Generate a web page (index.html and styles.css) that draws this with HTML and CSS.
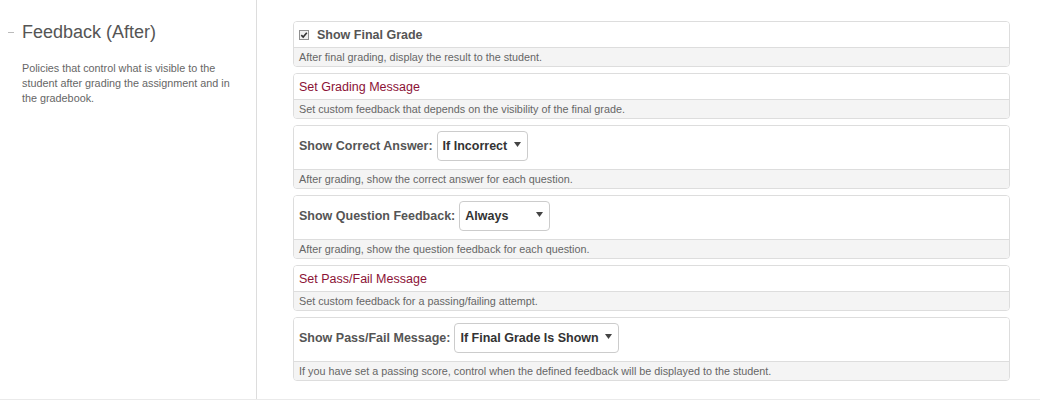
FILE: index.html
```html
<!DOCTYPE html>
<html>
<head>
<meta charset="utf-8">
<link rel="stylesheet" href="styles.css">
</head>
<body>
<div class="page">
  <aside class="sidebar">
    <h2 class="title"><span class="dash"></span>Feedback (After)</h2>
    <p class="desc">Policies that control what is visible to the student after grading the assignment and in the gradebook.</p>
  </aside>
  <main class="main">
    <section class="card">
      <div class="card-head">
        <span class="check"><svg width="10" height="10" viewBox="0 0 10 10"><rect x="0.5" y="0.5" width="9" height="9" fill="#f0f0f0" stroke="#8f8f8f"/><path d="M2.3 5.1 L4.2 7 L7.8 2.8" fill="none" stroke="#333" stroke-width="1.6"/></svg></span>
        <span class="label">Show Final Grade</span>
      </div>
      <div class="card-foot">After final grading, display the result to the student.</div>
    </section>
    <section class="card">
      <div class="card-head"><span class="link">Set Grading Message</span></div>
      <div class="card-foot">Set custom feedback that depends on the visibility of the final grade.</div>
    </section>
    <section class="card">
      <div class="card-head tall">
        <span class="label">Show Correct Answer:</span>
        <span class="select w-incorrect"><span>If Incorrect</span><svg class="caret" width="7" height="5" viewBox="0 0 7 5"><path d="M0 0 H7 L3.5 5 Z" fill="#444"/></svg></span>
      </div>
      <div class="card-foot">After grading, show the correct answer for each question.</div>
    </section>
    <section class="card">
      <div class="card-head tall">
        <span class="label">Show Question Feedback:</span>
        <span class="select w-always"><span>Always</span><svg class="caret" width="7" height="5" viewBox="0 0 7 5"><path d="M0 0 H7 L3.5 5 Z" fill="#444"/></svg></span>
      </div>
      <div class="card-foot">After grading, show the question feedback for each question.</div>
    </section>
    <section class="card">
      <div class="card-head"><span class="link">Set Pass/Fail Message</span></div>
      <div class="card-foot">Set custom feedback for a passing/failing attempt.</div>
    </section>
    <section class="card">
      <div class="card-head tall">
        <span class="label">Show Pass/Fail Message:</span>
        <span class="select w-shown"><span>If Final Grade Is Shown</span><svg class="caret" width="7" height="5" viewBox="0 0 7 5"><path d="M0 0 H7 L3.5 5 Z" fill="#444"/></svg></span>
      </div>
      <div class="card-foot">If you have set a passing score, control when the defined feedback will be displayed to the student.</div>
    </section>
  </main>
</div>
</body>
</html>
```

FILE: styles.css
```css
* { box-sizing: border-box; }
html, body { margin: 0; padding: 0; background: #fff; }
body { font-family: "Liberation Sans", Arial, sans-serif; color: #555; }

.page {
  display: flex;
  height: 400px;
  border-bottom: 1px solid #eaeaea;
}

.sidebar {
  width: 257px;
  flex: none;
  border-right: 1px solid #ddd;
  padding: 22px 20px 0 22px;
}

.title {
  position: relative;
  margin: 0;
  font-size: 18px;
  font-weight: normal;
  color: #555;
  line-height: 21px;
}
.dash {
  position: absolute;
  left: -14px;
  top: 10px;
  width: 6px;
  height: 1px;
  background: #bbb;
}

.desc {
  margin: 18px 0 0;
  font-size: 10.8px;
  line-height: 15px;
  color: #666;
}

.main {
  flex: none;
  width: 754px;
  padding: 21px 0 0 36px;
}

.card {
  width: 717px;
  border: 1px solid #ddd;
  border-radius: 4px;
  margin-bottom: 6px;
  overflow: hidden;
}

.card-head {
  display: flex;
  align-items: center;
  height: 25px;
  padding: 0 5px;
  background: #fff;
}
.card-head.tall { height: 43px; padding-bottom: 3px; }

.card-foot {
  border-top: 1px solid #ddd;
  background: #f4f4f4;
  height: 19px;
  padding: 0 5px;
  font-size: 10.8px;
  line-height: 18px;
  color: #666;
}

.check { display: flex; margin: 0 8px 0 0; }

.label {
  font-size: 12.5px;
  font-weight: bold;
  color: #555;
}

.link {
  font-size: 12.5px;
  color: #8b1236;
}

.select {
  display: flex;
  align-items: center;
  justify-content: space-between;
  height: 30px;
  margin-left: 4px;
  padding: 0 6px 0 5px;
  border: 1px solid #ccc;
  border-radius: 4px;
  font-size: 12.5px;
  font-weight: bold;
  color: #333;
}
.caret { margin-top: -3px; }
.w-incorrect { width: 91px; }
.w-always { width: 91px; }
.w-shown { width: 165px; }
```
